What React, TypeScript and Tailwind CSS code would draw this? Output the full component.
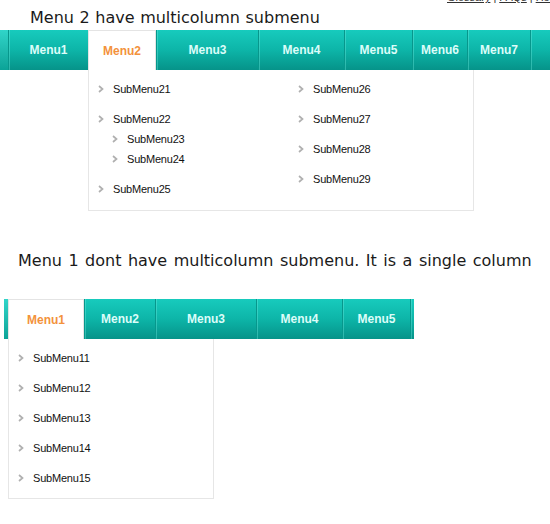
import React from "react";

type SubItem = { label: string; children?: string[] };
type TopItem = { label: string; width: string };

const Chevron = () => (
  <svg width="6" height="8" viewBox="0 0 6 8" className="shrink-0 block">
    <path d="M1 1 L4.5 4 L1 7" fill="none" stroke="#b0b0b0" strokeWidth="1.7" />
  </svg>
);

function SubRow({ label }: { label: string }) {
  return (
    <div className="flex items-center h-5 leading-5">
      <span className="w-[15px] flex items-center">
        <Chevron />
      </span>
      <span className="tracking-[-0.2px]">{label}</span>
    </div>
  );
}

function SubList({ items }: { items: SubItem[] }) {
  return (
    <ul>
      {items.map((it) => (
        <li key={it.label} className="py-[5px]">
          <SubRow label={it.label} />
          {it.children && (
            <ul className="pl-[14px]">
              {it.children.map((c) => (
                <li key={c}>
                  <SubRow label={c} />
                </li>
              ))}
            </ul>
          )}
        </li>
      ))}
    </ul>
  );
}

function MenuBar({
  items,
  active,
  lead,
  tail,
}: {
  items: TopItem[];
  active: number;
  lead: string;
  tail: string;
}) {
  return (
    <div className="flex h-10 bg-linear-to-b from-[#17cbbd] via-[#0db5a8] to-[#069389]">
      <div className={`${lead} h-full bg-linear-to-b from-[#30d5c9] to-[#0aa397]`} />
      {items.map((it, i) =>
        i === active ? (
          <div
            key={it.label}
            className={`${it.width} h-full bg-white border-t border-l border-r border-[#e4e4e4] flex items-center justify-center font-bold text-[12px] text-[#f3923c]`}
          >
            {it.label}
          </div>
        ) : (
          <div
            key={it.label}
            className={`${it.width} h-full border-l border-[#07978c] shadow-[inset_1px_0_0_rgba(120,240,228,0.35)] flex items-center justify-center font-bold text-[12px] text-[#dcfdf9]`}
          >
            {it.label}
          </div>
        )
      )}
      <div className={`${tail} h-full border-l border-[#07978c] shadow-[inset_1px_0_0_rgba(120,240,228,0.35)]`} />
    </div>
  );
}

const barOne: TopItem[] = [
  { label: "Menu1", width: "w-[80px]" },
  { label: "Menu2", width: "w-[68px]" },
  { label: "Menu3", width: "w-[102px]" },
  { label: "Menu4", width: "w-[86px]" },
  { label: "Menu5", width: "w-[68px]" },
  { label: "Menu6", width: "w-[55px]" },
  { label: "Menu7", width: "w-[63px]" },
];

const barTwo: TopItem[] = [
  { label: "Menu1", width: "w-[76px]" },
  { label: "Menu2", width: "w-[71px]" },
  { label: "Menu3", width: "w-[101px]" },
  { label: "Menu4", width: "w-[86px]" },
  { label: "Menu5", width: "w-[68px]" },
];

const colA: SubItem[] = [
  { label: "SubMenu21" },
  { label: "SubMenu22", children: ["SubMenu23", "SubMenu24"] },
  { label: "SubMenu25" },
];
const colB: SubItem[] = [
  { label: "SubMenu26" },
  { label: "SubMenu27" },
  { label: "SubMenu28" },
  { label: "SubMenu29" },
];
const single: SubItem[] = [
  { label: "SubMenu11" },
  { label: "SubMenu12" },
  { label: "SubMenu13" },
  { label: "SubMenu14" },
  { label: "SubMenu15" },
];

export default function App() {
  return (
    <div className="w-[550px] h-[524px] bg-white overflow-hidden font-['Liberation_Sans',Arial,sans-serif]">
      {/* utility links, scrolled mostly out of view */}
      <div className="-mt-[10px] h-[14px] leading-[14px] pl-[447px] whitespace-nowrap text-[11px] text-[#333] flex gap-[3px]">
        <span className="underline">Glossary</span>
        <span>|</span>
        <span className="underline">FAQs</span>
        <span>|</span>
        <span className="underline">Help</span>
      </div>

      <h2 className="mt-[4px] pl-[30px] h-5 leading-5 text-[16px] text-[#1a1a1a] font-['DejaVu_Sans',Verdana,sans-serif] [word-spacing:0.5px]">
        Menu 2 have multicolumn submenu
      </h2>

      <div className="mt-[2px]">
        <MenuBar items={barOne} active={1} lead="w-[8px]" tail="flex-1" />
      </div>

      <div className="ml-[88px] w-[386px] border-l border-r border-b border-[#e6e6e6] bg-white pl-[9px] pt-[4px] pb-[6px] text-[11px] text-[#111] grid grid-cols-[200px_1fr]">
        <SubList items={colA} />
        <SubList items={colB} />
      </div>

      <h2 className="mt-[40px] pl-[18px] h-5 leading-5 text-[16px] text-[#1a1a1a] font-['DejaVu_Sans',Verdana,sans-serif] whitespace-nowrap [word-spacing:1.4px]">
        Menu 1 dont have multicolumn submenu. It is a single column
      </h2>

      <div className="mt-[28px] ml-[4px] w-[410px]">
        <MenuBar items={barTwo} active={0} lead="w-[4px]" tail="w-[4px]" />
      </div>

      <div className="ml-[8px] w-[206px] border-l border-r border-b border-[#e6e6e6] bg-white pl-[9px] pt-[4px] pb-[5px] text-[11px] text-[#111]">
        <SubList items={single} />
      </div>
    </div>
  );
}
